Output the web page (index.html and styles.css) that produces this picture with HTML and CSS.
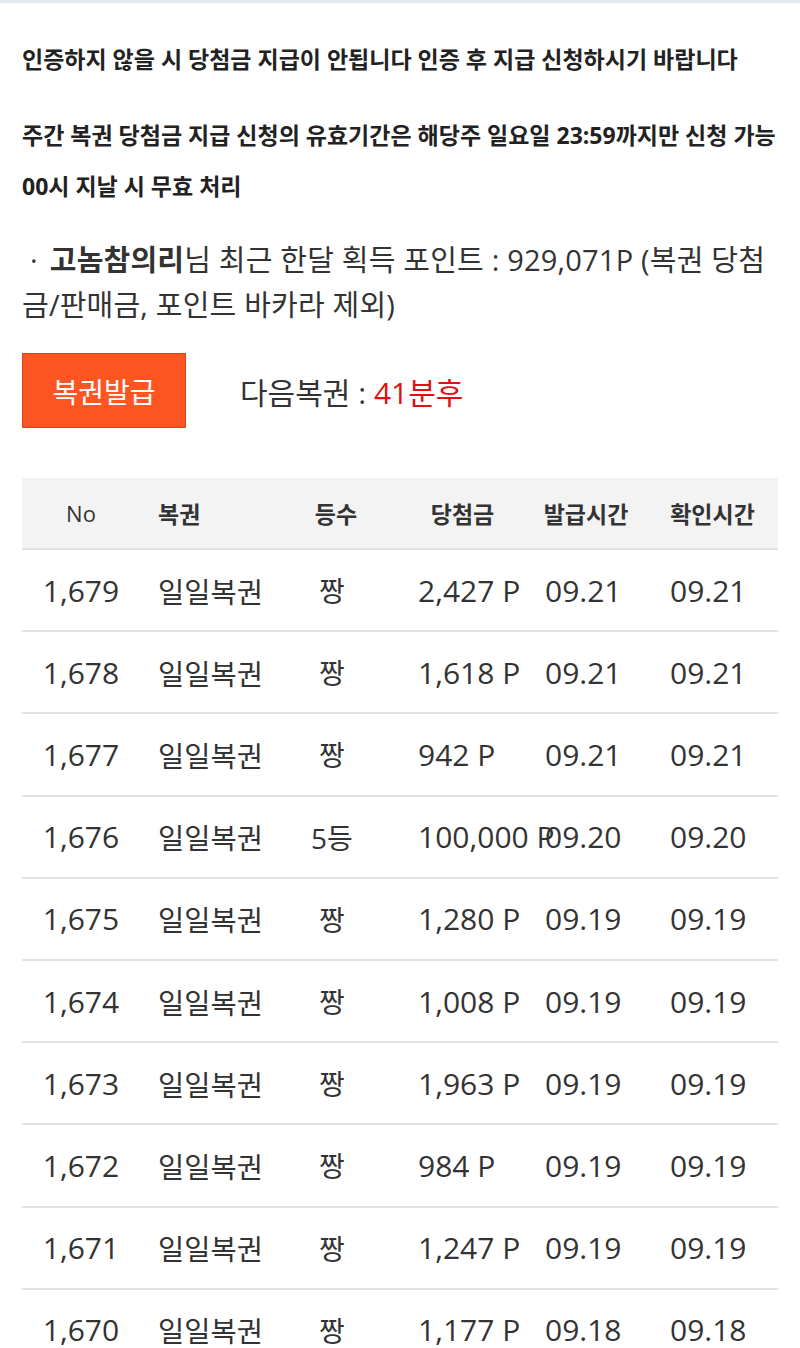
FILE: index.html
```html
<!DOCTYPE html>
<html lang="ko">
<head>
<meta charset="utf-8">
<title>복권</title>
<link rel="stylesheet" href="styles.css">
</head>
<body>
<div class="topbar"></div>
<main class="wrap">
  <p class="notice n1">인증하지 않을 시 당첨금 지급이 안됩니다 인증 후 지급 신청하시기 바랍니다</p>
  <p class="notice n2"><span class="ln">주간 복권 당첨금 지급 신청의 유효기간은 해당주 일요일 23:59까지만 신청 가능</span><span class="ln">00시 지날 시 무효 처리</span></p>
  <p class="points"><span class="dot">·</span><b>고놈참의리</b>님 최근 한달 획득 포인트 : 929,071P (복권 당첨금/판매금, 포인트 바카라 제외)</p>
  <div class="issue">
    <button class="btn" type="button">복권발급</button>
    <div class="next">다음복권 : <span class="red">41분후</span></div>
  </div>
  <div class="table">
    <div class="row head">
      <div class="c1">No</div><div class="c2">복권</div><div class="c3">등수</div><div class="c4">당첨금</div><div class="c5">발급시간</div><div class="c6">확인시간</div>
    </div>
    <div class="row"><div class="c1">1,679</div><div class="c2">일일복권</div><div class="c3">짱</div><div class="c4">2,427 P</div><div class="c5">09.21</div><div class="c6">09.21</div></div>
    <div class="row"><div class="c1">1,678</div><div class="c2">일일복권</div><div class="c3">짱</div><div class="c4">1,618 P</div><div class="c5">09.21</div><div class="c6">09.21</div></div>
    <div class="row"><div class="c1">1,677</div><div class="c2">일일복권</div><div class="c3">짱</div><div class="c4">942 P</div><div class="c5">09.21</div><div class="c6">09.21</div></div>
    <div class="row"><div class="c1">1,676</div><div class="c2">일일복권</div><div class="c3">5등</div><div class="c4">100,000 P</div><div class="c5">09.20</div><div class="c6">09.20</div></div>
    <div class="row"><div class="c1">1,675</div><div class="c2">일일복권</div><div class="c3">짱</div><div class="c4">1,280 P</div><div class="c5">09.19</div><div class="c6">09.19</div></div>
    <div class="row"><div class="c1">1,674</div><div class="c2">일일복권</div><div class="c3">짱</div><div class="c4">1,008 P</div><div class="c5">09.19</div><div class="c6">09.19</div></div>
    <div class="row"><div class="c1">1,673</div><div class="c2">일일복권</div><div class="c3">짱</div><div class="c4">1,963 P</div><div class="c5">09.19</div><div class="c6">09.19</div></div>
    <div class="row"><div class="c1">1,672</div><div class="c2">일일복권</div><div class="c3">짱</div><div class="c4">984 P</div><div class="c5">09.19</div><div class="c6">09.19</div></div>
    <div class="row"><div class="c1">1,671</div><div class="c2">일일복권</div><div class="c3">짱</div><div class="c4">1,247 P</div><div class="c5">09.19</div><div class="c6">09.19</div></div>
    <div class="row"><div class="c1">1,670</div><div class="c2">일일복권</div><div class="c3">짱</div><div class="c4">1,177 P</div><div class="c5">09.18</div><div class="c6">09.18</div></div>
  </div>
</main>
</body>
</html>
```
FILE: styles.css
```css
html, body {
  margin: 0;
  padding: 0;
  background: #fff;
}
body {
  font-family: "Open Sans", "Noto Sans CJK KR", sans-serif;
  color: #333;
  overflow: hidden;
}
.topbar {
  height: 3px;
  background: #e4e9ee;
}
.wrap {
  padding: 0 22px;
}
.notice {
  margin: 0;
  font-size: 23px;
  font-weight: 700;
  line-height: 51px;
  color: #222;
  white-space: nowrap;
}
.n1 {
  margin-top: 31px;
}
.n2 {
  margin-top: 25px;
}
.ln {
  display: block;
}
.points {
  margin: 25px 0 0;
  font-size: 29px;
  line-height: 45px;
  letter-spacing: 0.2px;
  color: #333;
}
.points b {
  font-weight: 700;
}
.dot {
  margin: 0 12px 0 8px;
}
.issue {
  display: flex;
  align-items: center;
  margin-top: 26px;
}
.btn {
  width: 164px;
  height: 75px;
  box-sizing: border-box;
  background: #fe5522;
  border: 1px solid #d4471c;
  color: #fff;
  font-family: "Open Sans", "Noto Sans CJK KR", sans-serif;
  font-size: 28px;
  padding: 0;
  border-radius: 0;
}
.next {
  margin-left: 54px;
  font-size: 30px;
  color: #333;
}
.red {
  color: #e01010;
}
.table {
  margin-top: 50px;
}
.row {
  display: grid;
  grid-template-columns: 118px 150px 84px 151px 122px 131px;
  align-items: center;
  height: 82.2px;
  box-sizing: border-box;
  border-bottom: 2px solid #e2e2e2;
  font-size: 30px;
  color: #333;
  white-space: nowrap;
}
.c1 { text-align: center; }
.c2 { padding-left: 18px; font-size: 28.5px; }
.c3 { text-align: center; font-size: 28px; }
.c4 { padding-left: 44px; }
.c5 { padding-left: 20px; }
.c6 { padding-left: 23px; }
.head {
  height: 72px;
  background: #f3f3f3;
  font-weight: 700;
}
.head > div {
  padding-left: 0;
  text-align: center;
  font-size: 23px;
}
.head .c1 {
  font-weight: 400;
  font-size: 22px;
}
.head .c2 {
  text-align: left;
  padding-left: 18px;
}
.head .c3 {
  padding-left: 8px;
}
.head .c4 {
  padding-left: 26px;
}
```
